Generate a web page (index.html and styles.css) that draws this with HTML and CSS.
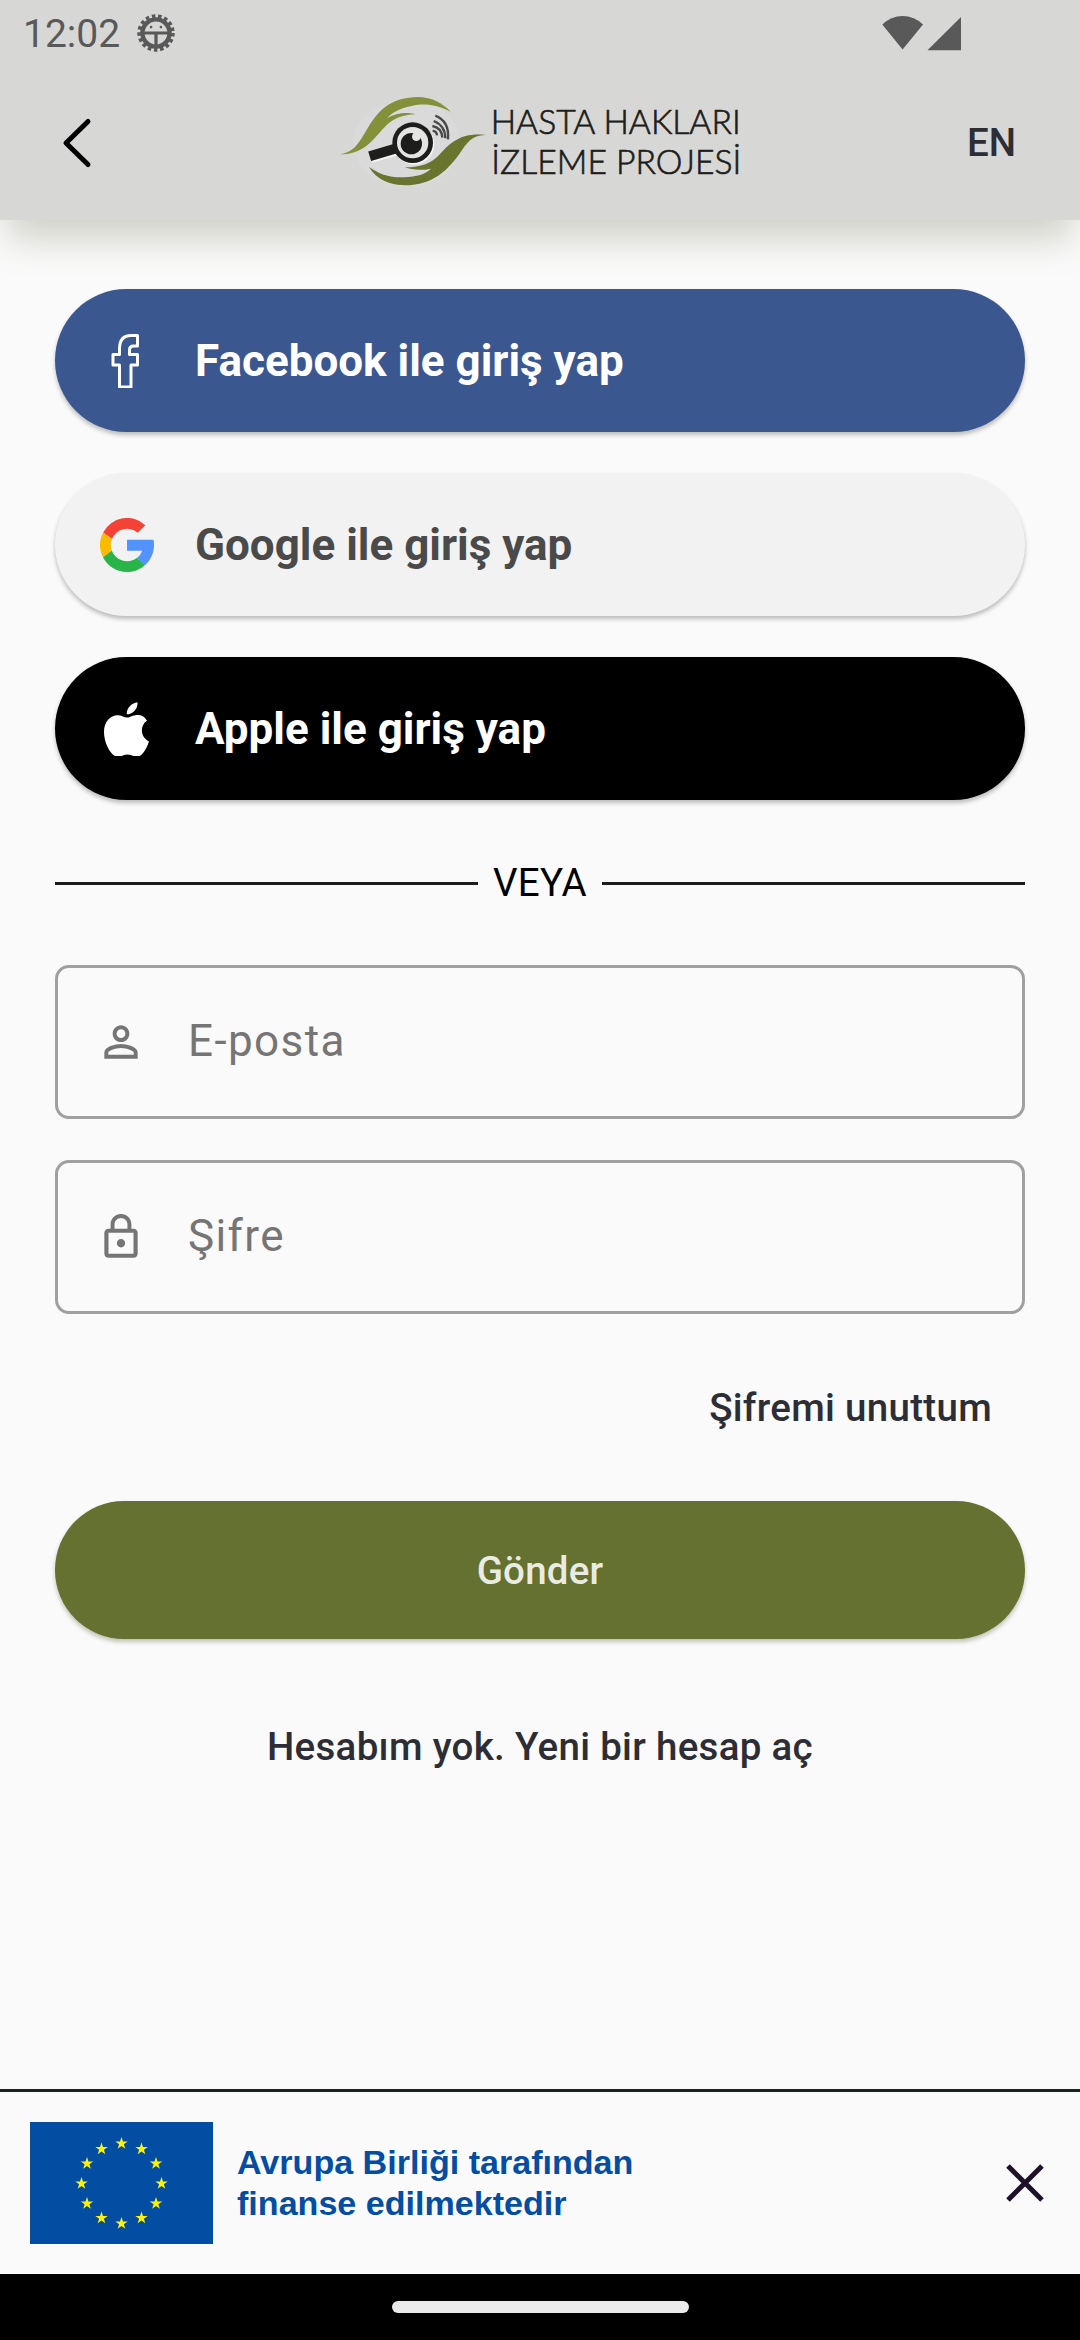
FILE: index.html
```html
<!DOCTYPE html>
<html lang="tr">
<head>
<meta charset="utf-8">
<title>Hasta Hakları İzleme Projesi</title>
<link rel="stylesheet" href="styles.css">
</head>
<body>
<div class="screen">
  <header class="header">
    <div class="status">
      <span class="clock">12:02</span>
      <svg class="status-gear" viewBox="0 0 40 40">
        <circle cx="20" cy="20" r="17.8" fill="none" stroke="#595959" stroke-width="3.8" stroke-dasharray="3.700 2.880"/>
        <circle cx="20" cy="20" r="14.3" fill="none" stroke="#595959" stroke-width="4.6"/>
        <path d="M7 20h26M20 20v13" stroke="#595959" stroke-width="3.4"/>
        <circle cx="14.8" cy="13.8" r="1.4" fill="#595959"/><circle cx="25.2" cy="13.8" r="1.4" fill="#595959"/>
      </svg>
      <svg class="status-signal" viewBox="0 0 80 36">
        <path d="M.3 9.5Q9 1 20.600 1T41 9.500L20.600 34.500z" fill="#595959"/>
        <path d="M79 2V35.300H45.500z" fill="#595959"/>
      </svg>
    </div>
    <nav class="appbar">
      <svg class="back" viewBox="0 0 34 54"><path d="M26 5.500L4 27l22 21.500" fill="none" stroke="#000" stroke-width="5" stroke-linecap="round" stroke-linejoin="round"/></svg>
      <svg class="logo" viewBox="0 0 1260 360">
        <ellipse cx="230" cy="190" rx="160" ry="132" fill="#dadada"/>
        <path d="M30 223C70 216 82 196 104 160C134 110 164 54 260 51C310 51 340 72 362 95C320 75 285 68 245 78C205 86 185 100 172 114C200 98 230 96 258 103C215 104 190 116 165 140C130 176 105 222 30 223z" fill="#84913a"/>
        <path d="M468 165C425 164 410 190 388 222C355 268 310 316 225 316C165 314 135 290 117 261C150 284 185 296 235 291C275 287 290 278 303 266C275 272 245 270 224 262C275 262 305 250 330 222C365 185 395 157 468 165z" fill="#69752f"/>
        <path d="M125 233L208 209" stroke="#f4f4f4" stroke-width="30"/>
        <path d="M119 229L205 203" stroke="#1d1d1b" stroke-width="30"/>
        <circle cx="252" cy="193" r="61" fill="#f4f4f4"/>
        <circle cx="248" cy="188" r="61" fill="#1d1d1b"/>
        <circle cx="248" cy="188" r="47" fill="#e4e4e3"/>
        <circle cx="244" cy="191" r="32" fill="#1d1d1b"/>
        <circle cx="259" cy="170" r="13" fill="#e4e4e3"/>
        <g fill="none" stroke="#494949" stroke-width="7">
          <path d="M308 152Q320 154 321 166"/><path d="M307 138Q335 143 337 173"/><path d="M311 123Q346 137 346 175"/><path d="M316 107Q359 124 354 178"/>
        </g>
        <g class="logo-text">
          <text x="482" y="161" textLength="750" lengthAdjust="spacingAndGlyphs">HASTA HAKLARI</text>
          <text x="484" y="282" textLength="750" lengthAdjust="spacingAndGlyphs">İZLEME PROJESİ</text>
        </g>
      </svg>
      <span class="lang">EN</span>
    </nav>
  </header>

  <main class="content">
    <div class="social facebook">
      <svg viewBox="0 0 54 54"><path d="M19.500 53V31H13V20.500H19.500V15C19.500 5 24 1.500 31 1.500H37.500V12H33.500C30.500 12 29.500 13.500 29.500 16V20.500H37.500V31H31V53z" fill="none" stroke="#fff" stroke-width="3" stroke-linejoin="round"/></svg>
      <span>Facebook ile giriş yap</span>
    </div>
    <div class="social google">
      <svg viewBox="4 4 40 40">
        <path fill="#5393ff" d="M43.600 20.100H24v8.100h11.300a12 12 0 0 1-4.100 5.600l6.200 5.200C41.400 35.400 44 30 44 24c0-1.400-.1-2.600-.4-3.900z"/>
        <path fill="#f44336" d="M6.300 14.700l6.600 4.800A12 12 0 0 1 31.900 15l5.700-5.700A20 20 0 0 0 6.300 14.700z"/>
        <path fill="#28b446" d="M24 44c5.200 0 9.900-2 13.400-5.200l-6.200-5.200A12 12 0 0 1 12.700 28l-6.500 5A20 20 0 0 0 24 44z"/>
        <path fill="#fbbb00" d="M6.300 14.700a20 20 0 0 0-.1 18.300l6.500-5a12 12 0 0 1 .2-8.500z"/>
      </svg>
      <span>Google ile giriş yap</span>
    </div>
    <div class="social apple">
      <svg viewBox="0 0 54 54"><path fill="#fff" d="M37.500.3C38 7 32.500 12.200 26.800 12.300 26.200 6.500 31.800.8 37.500.3zM47 18.800C39.500 23.500 40.300 35.500 49 39.500 46.500 46.500 42.500 54.500 37 54.800 33 54.800 32 52.500 27.500 52.500 23 52.500 21.800 54.900 18 54.900 11.500 54.900 4 42 4 30 4 19.500 10.500 13.200 17.500 13.200 21.800 13.200 24.500 15.500 27 15.500 30 15.500 33 12.700 38.500 12.900 42.500 13.200 45.500 15.600 47 18.800z"/></svg>
      <span>Apple ile giriş yap</span>
    </div>

    <div class="divider"><i></i><span>VEYA</span><i></i></div>

    <div class="field">
      <svg viewBox="0 0 24 24"><path d="M12 5.900a2.100 2.100 0 1 1 0 4.200 2.100 2.100 0 0 1 0-4.200m0 9c2.970 0 6.100 1.460 6.100 2.100v1.100H5.900V17c0-.64 3.130-2.100 6.100-2.100M12 4C9.790 4 8 5.790 8 8s1.790 4 4 4 4-1.790 4-4-1.790-4-4-4zm0 9c-2.670 0-8 1.340-8 4v3h16v-3c0-2.660-5.330-4-8-4z"/></svg>
      <span>E-posta</span>
    </div>
    <div class="field">
      <svg viewBox="0 0 24 24"><path d="M12 17c1.100 0 2-.9 2-2s-.9-2-2-2-2 .9-2 2 .9 2 2 2zm6-9h-1V6c0-2.760-2.240-5-5-5S7 3.240 7 6v2H6c-1.100 0-2 .9-2 2v10c0 1.100.9 2 2 2h12c1.100 0 2-.9 2-2V10c0-1.100-.9-2-2-2zM8.900 6c0-1.710 1.390-3.100 3.100-3.100s3.100 1.390 3.100 3.100v2H8.900V6zM18 20H6V10h12v10z"/></svg>
      <span>Şifre</span>
    </div>

    <a class="forgot">Şifremi unuttum</a>
    <div class="submit">Gönder</div>
    <a class="register">Hesabım yok. Yeni bir hesap aç</a>
  </main>

  <footer class="banner">
    <svg class="flag" viewBox="0 0 183 122" preserveAspectRatio="none">
      <defs><path id="star" d="M0-6.500L1.500-2H6.200L2.400.8 3.800 5.300 0 2.500-3.800 5.300-2.400.8-6.200-2H-1.500z"/></defs>
      <rect width="183" height="122" fill="#034ea2"/>
      <g fill="#fff200">
        <use href="#star" x="91.500" y="21.500"/><use href="#star" x="111.500" y="27"/><use href="#star" x="126" y="41.500"/>
        <use href="#star" x="131.500" y="61.500"/><use href="#star" x="126" y="81.500"/><use href="#star" x="111.500" y="96"/>
        <use href="#star" x="91.500" y="101.500"/><use href="#star" x="71.500" y="96"/><use href="#star" x="57" y="81.500"/>
        <use href="#star" x="51.500" y="61.500"/><use href="#star" x="57" y="41.500"/><use href="#star" x="71.500" y="27"/>
      </g>
    </svg>
    <p class="banner-text">Avrupa Birliği tarafından<br>finanse edilmektedir</p>
    <svg class="close" viewBox="0 0 38 38"><path d="M2 2L36 36M36 2L2 36" stroke="#1f1128" stroke-width="5"/></svg>
  </footer>
  <div class="navbar"><div class="handle"></div></div>
</div>
</body>
</html>
```
FILE: styles.css
```css
* { box-sizing: border-box; }
body { margin: 0; font-family: Roboto, "Noto Sans", sans-serif; background: #fafafa; }
svg { display: block; flex: none; }
.screen { width: 1080px; height: 2340px; display: flex; flex-direction: column; background: #fafafa; overflow: hidden; }

.header { height: 220px; background: #d7d7d5; box-shadow: 0 26px 34px -8px rgba(90, 97, 60, .27); }
.status { height: 66px; display: flex; align-items: center; padding: 0 118px 0 23px; color: #595959; }
.clock { font-size: 39px; line-height: 46px; width: 114px; padding-top: 2px; }
.status-gear { width: 38px; height: 38px; }
.status-signal { width: 80px; height: 36px; margin-left: auto; }
.appbar { height: 154px; display: flex; align-items: flex-start; padding: 14px 0 0 62px; }
.back { width: 34px; height: 54px; margin-top: 36px; }
.logo { width: 420px; height: 120px; margin-left: 234px; }
.logo-text { font-family: Lato, sans-serif; font-weight: 300; font-size: 102px; fill: #1d1d1b; stroke: #1d1d1b; stroke-width: 2; }
.lang { margin: 40px 0 0 217px; font-size: 38.5px; line-height: 46px; font-weight: 500; color: #2d2d35; }

.content { flex: 1; padding: 69px 55px 0; display: flex; flex-direction: column; }
.social { height: 143px; margin-bottom: 41px; border-radius: 72px; padding-left: 45px; display: flex; align-items: center; gap: 41px; font-size: 44px; font-weight: 700; color: #fff; box-shadow: 0 3px 4px rgba(0, 0, 0, .25); }
.social svg { width: 54px; height: 54px; }
.facebook { background: #3b5790; }
.google { background: #f2f2f2; color: #4a4a4a; }
.apple { background: #000; }

.divider { height: 46px; margin: 19px 0 59px; display: flex; align-items: center; justify-content: space-between; font-size: 38.5px; line-height: 46px; letter-spacing: .3px; color: #000; }
.divider i { width: 423px; height: 3px; background: #1c1c1c; }

.field { height: 154px; margin-bottom: 41px; border: 3px solid #a0a0a0; border-radius: 14px; display: flex; align-items: center; padding-left: 38px; gap: 42px; font-size: 44px; letter-spacing: 1.4px; color: #757575; }
.field svg { width: 50px; height: 50px; fill: #757575; }
.field span { padding-bottom: 2px; }

.forgot { align-self: flex-end; margin: 30px 33px 0 0; font-size: 38.5px; line-height: 46px; font-weight: 500; letter-spacing: .3px; color: #2d2d35; }
.submit { height: 138px; margin-top: 70px; border-radius: 69px; background: #657131; color: #eaebe3; font-size: 38.5px; font-weight: 500; letter-spacing: .2px; display: flex; align-items: center; justify-content: center; box-shadow: 0 3px 4px rgba(60, 65, 20, .3); }
.register { align-self: center; margin-top: 85px; font-size: 38.5px; line-height: 46px; font-weight: 500; letter-spacing: .3px; color: #2d2d35; }

.banner { height: 185px; border-top: 3px solid #1b211c; display: flex; align-items: center; padding: 0 36px 0 30px; }
.flag { width: 183px; height: 122px; }
.banner-text { margin: 0 0 0 24px; font-family: "Liberation Sans", Arial, sans-serif; font-weight: 700; font-size: 34.1px; line-height: 41px; color: #034ea2; }
.close { width: 38px; height: 38px; margin-left: auto; }

.navbar { height: 66px; background: #000; display: flex; justify-content: center; padding-top: 27px; }
.handle { width: 297px; height: 12px; border-radius: 6px; background: #ebebeb; }
```
